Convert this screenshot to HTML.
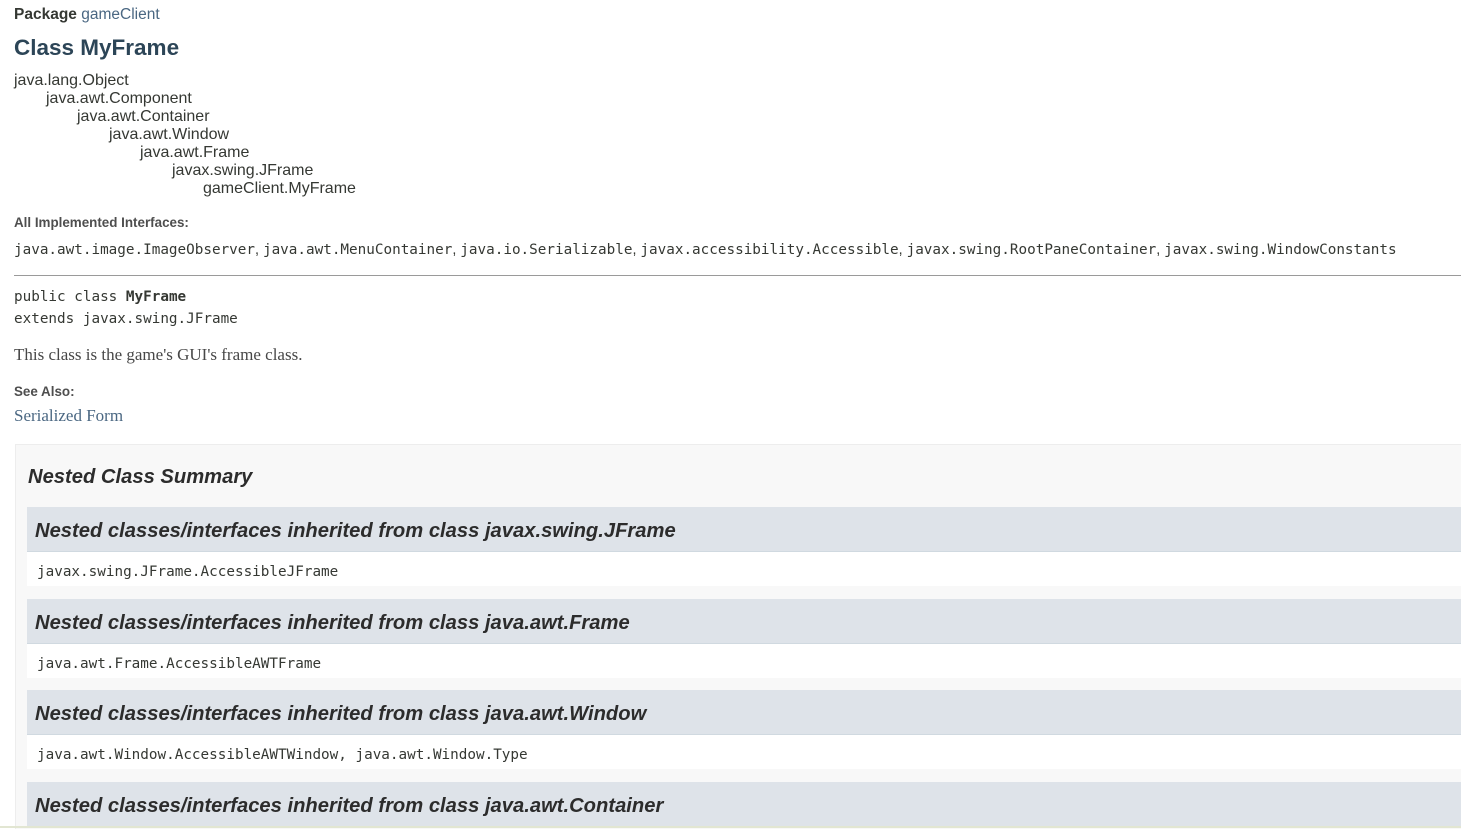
<!DOCTYPE html>
<html><head><meta charset="utf-8"><style>
body{margin:0;width:1461px;height:828px;overflow:hidden;background:#fff;color:#353833;font-family:"Liberation Sans",sans-serif;position:relative}
.a{position:absolute;white-space:nowrap}
.m{font-family:"DejaVu Sans Mono","Liberation Mono",monospace;font-size:14.3px;color:#353833}
.t{font-size:16px;line-height:18px;color:#353833}
.h3{font-style:italic;font-weight:bold;font-size:20.2px;color:#2c2c2c}
.bar{position:absolute;left:27px;width:1434px;height:44px;background:#dee3e9;border-bottom:1px solid #d0d9e0}
.row{position:absolute;left:27px;width:1434px;height:34px;background:#fff}
.c{color:#4a6782}
</style></head><body>
<div class="a" style="left:14px;top:6px;font-size:15.5px;line-height:18px"><b>Package</b> <span class="c">gameClient</span></div>
<div class="a" style="left:14px;top:34px;font-size:22.5px;line-height:28px;font-weight:bold;color:#2c4557">Class MyFrame</div>
<div class="a t" style="left:14px;top:72px">java.lang.Object</div>
<div class="a t" style="left:46px;top:90px">java.awt.Component</div>
<div class="a t" style="left:77px;top:108px">java.awt.Container</div>
<div class="a t" style="left:109px;top:126px">java.awt.Window</div>
<div class="a t" style="left:140px;top:144px">java.awt.Frame</div>
<div class="a t" style="left:172px;top:162px">javax.swing.JFrame</div>
<div class="a t" style="left:203px;top:180px">gameClient.MyFrame</div>
<div class="a" style="left:14px;top:215px;font-size:13.4px;line-height:16px;font-weight:bold;color:#4e4e4e">All Implemented Interfaces:</div>
<div class="a m" style="left:14px;top:241px;line-height:18px">java.awt.image.ImageObserver<span style="font-family:'Liberation Sans'">, </span>java.awt.MenuContainer<span style="font-family:'Liberation Sans'">, </span>java.io.Serializable<span style="font-family:'Liberation Sans'">, </span>javax.accessibility.Accessible<span style="font-family:'Liberation Sans'">, </span>javax.swing.RootPaneContainer<span style="font-family:'Liberation Sans'">, </span>javax.swing.WindowConstants</div>
<div class="a" style="left:14px;top:275px;width:1447px;height:1px;background:#9a9a9a"></div>
<div class="a m" style="left:14px;top:288px;line-height:18px">public class <b>MyFrame</b></div>
<div class="a m" style="left:14px;top:310px;line-height:18px">extends javax.swing.JFrame</div>
<div class="a" style="left:14px;top:345px;font-family:'Liberation Serif',serif;font-size:17px;line-height:20px;color:#474747">This class is the game's GUI's frame class.</div>
<div class="a" style="left:14px;top:384px;font-size:13.4px;line-height:16px;font-weight:bold;color:#4e4e4e">See Also:</div>
<div class="a c" style="left:14px;top:406px;font-family:'Liberation Serif',serif;font-size:17px;line-height:20px">Serialized Form</div>
<div class="a" style="left:15px;top:444px;width:1446px;height:384px;background:#f8f8f8;border-top:1px solid #ededed;border-left:1px solid #ededed"></div>
<div class="a h3" style="left:28px;top:465px;line-height:24px">Nested Class Summary</div>

<div class="bar" style="top:507px"></div>
<div class="a h3" style="left:35px;top:519px;line-height:24px">Nested classes/interfaces inherited from class javax.swing.JFrame</div>
<div class="row" style="top:552px"></div>
<div class="a m" style="left:37px;top:563px;line-height:18px">javax.swing.JFrame.AccessibleJFrame</div>

<div class="bar" style="top:599px"></div>
<div class="a h3" style="left:35px;top:611px;line-height:24px">Nested classes/interfaces inherited from class java.awt.Frame</div>
<div class="row" style="top:644px"></div>
<div class="a m" style="left:37px;top:655px;line-height:18px">java.awt.Frame.AccessibleAWTFrame</div>

<div class="bar" style="top:690px"></div>
<div class="a h3" style="left:35px;top:702px;line-height:24px">Nested classes/interfaces inherited from class java.awt.Window</div>
<div class="row" style="top:735px"></div>
<div class="a m" style="left:37px;top:746px;line-height:18px">java.awt.Window.AccessibleAWTWindow, java.awt.Window.Type</div>

<div class="bar" style="top:782px"></div>
<div class="a h3" style="left:35px;top:794px;line-height:24px">Nested classes/interfaces inherited from class java.awt.Container</div>
<div class="a" style="left:0;top:826px;width:1461px;height:2px;background:#e2e6d2"></div>
</body></html>
